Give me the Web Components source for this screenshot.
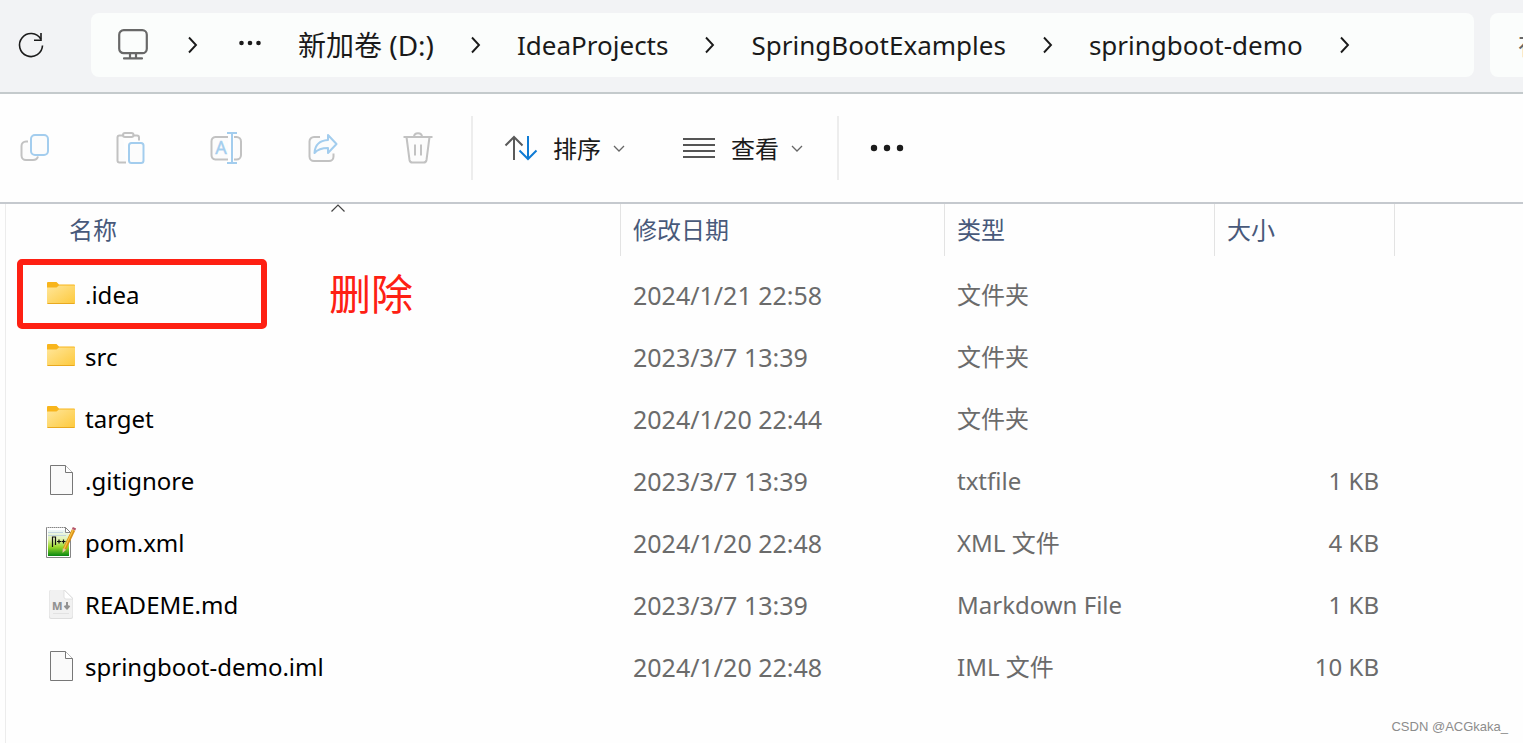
<!DOCTYPE html>
<html lang="zh-CN">
<head>
<meta charset="utf-8">
<title>springboot-demo</title>
<style>
html, body { margin: 0; min-height: 100%; background: #fefefe; }
body { font-family: "Noto Sans", "Noto Sans CJK SC", sans-serif; color: #1a1a1a; overflow-x: hidden; }
</style>
</head>
<body>
<explorer-window></explorer-window>

<script>
const ICONS = {
  refresh: [32, 32, `<g fill="none" stroke="#1b1b1b" stroke-width="1.6"><path d="M27.5 16.5A11.5 11.5 0 1 1 25.8 10"/><path d="M26 4v7.2h-7"/></g>`],
  monitor: [32, 32, `<g fill="none" stroke="#686868" stroke-width="2.2" stroke-linecap="round"><rect x="2.2" y="1.2" width="27.6" height="23" rx="4.5"/><path d="M13 25v4M19 25v4M7 29.4h18"/></g>`],
  next: [12, 20, `<path d="M2 2.5 9 10l-7 7.500" fill="none" stroke="#1b1b1b" stroke-width="1.9"/>`],
  dots: [24, 20, `<g fill="#1b1b1b"><circle cx="3.500" cy="8" r="2.300"/><circle cx="12" cy="8" r="2.300"/><circle cx="20.500" cy="8" r="2.300"/></g>`],
  copy: [40, 40, `<g fill="#fcfcfc" stroke-width="2"><path stroke="#c2c2c2" stroke-linecap="butt" d="M14 13.500h-2a4.500 4.500 0 0 0-4.500 4.500v9.500a4.500 4.500 0 0 0 4.500 4.500h7q4 0 5-3.500"/><rect stroke="#a3cdee" x="17" y="7" width="17" height="20" rx="4"/></g>`],
  paste: [40, 40, `<g fill="#fcfcfc" stroke-width="2"><path stroke="#c2c2c2" d="M13 7.500H9.500a2 2 0 0 0-2 2V32.500a2 2 0 0 0 2 2H16M24 7.500h3a2 2 0 0 1 2 2v3"/><rect stroke="#c2c2c2" x="13" y="5" width="10.500" height="4" rx="2"/><rect stroke="#a3cdee" x="19" y="15" width="14.500" height="20" rx="2.500"/></g>`],
  rename: [40, 40, `<g fill="none" stroke-width="2"><path stroke="#c2c2c2" fill="#fcfcfc" d="M22 9H9.500a4.500 4.500 0 0 0-4 4.500V27a4.500 4.500 0 0 0 4 4.500H22M28 9h2.500a4.500 4.500 0 0 1 4.500 4.500V27a4.500 4.500 0 0 1-4.500 4.500H28"/><path stroke="#a3cdee" d="M26 5v30M21 5h10M21 35h10"/></g><text x="15" y="26" text-anchor="middle" font-family="Noto Sans, sans-serif" font-size="18" fill="#a3cdee" stroke="#a3cdee" stroke-width=".4">A</text>`],
  share: [40, 40, `<g fill="#fcfcfc" stroke-width="2" stroke-linejoin="round"><path stroke="#c2c2c2" d="M18 9h-6a4.500 4.500 0 0 0-4.500 4.500v15a4.500 4.500 0 0 0 4.500 4.500h15a4.500 4.500 0 0 0 4.500-4.500v-3"/><path stroke="#a3cdee" d="M26 7l8.500 9-8.500 9v-5c-6 0-10 1-13.500 5 .5-8 5-12.500 13.500-13z"/></g>`],
  trash: [40, 40, `<g fill="#fcfcfc" stroke="#c2c2c2" stroke-width="2"><path d="M16 9c0-5 8-5 8 0"/><path d="M8.500 9l3 23a3 3 0 0 0 3 2.500h11a3 3 0 0 0 3-2.500l3-23"/><path d="M5.500 9h29M17 16.500v11M23 16.500v11"/></g>`],
  sort: [40, 40, `<g fill="none" stroke-width="2"><path stroke="#5a5a5a" d="M13 32V8.500M4.500 17.500 13 9l8.500 8.500"/><path stroke="#0f7bd4" d="M27 8v23.500M18.500 22.500 27 31l8.500-8.500"/></g>`],
  view: [40, 40, `<path stroke="#555" stroke-width="2" d="M4 11h32M4 17h32M4 23h32M4 29h32"/>`],
  down: [12, 12, `<path d="M1 4l5 5 5-5" fill="none" stroke="#666" stroke-width="1.300"/>`],
  up: [16, 8, `<path d="M1.500 7.500 8 1l6.500 6.500" fill="none" stroke="#444" stroke-width="1.200"/>`],
  more: [40, 40, `<g fill="#1b1b1b"><circle cx="7" cy="20" r="3.200"/><circle cx="20" cy="20" r="3.200"/><circle cx="33" cy="20" r="3.200"/></g>`],
  folder: [32, 32, `<defs><linearGradient id="f" x1="0" y1="0" x2="1" y2="1"><stop offset="0" stop-color="#ffe69a"/><stop offset="1" stop-color="#fdc93c"/></linearGradient></defs><path fill="#f8b51c" d="M3 3h8.500L14 5.500h15a1 1 0 0 1 1 1V20H2V4a1 1 0 0 1 1-1z"/><path fill="url(#f)" d="M2 8.500h9.500L14 6.500h16V24a1 1 0 0 1-1 1H3a1 1 0 0 1-1-1z"/><path stroke="#e9a91f" d="M2.500 24.500h27"/>`],
  file: [32, 32, `<path fill="#fafafa" stroke="#777" d="M5.500.5h15l7 7v22h-22z"/><path fill="#fff" stroke="#777" d="M20.500.5v7h7"/>`],
  npp: [32, 32, `<defs><linearGradient id="g" x1="0" y1="0" x2="0" y2="1"><stop offset="0" stop-color="#eef7fb"/><stop offset=".35" stop-color="#e2f3b4"/><stop offset=".65" stop-color="#9ad92c"/><stop offset="1" stop-color="#078612"/></linearGradient></defs><path fill="#fff" stroke="#858585" d="M1.500.5h19l5 5v25h-24z"/><path fill="url(#g)" d="M3 3h17l4 4v22H3z"/><path stroke="#b7cddd" d="M3 5.500h15M3 8.500h18" stroke-width=".8"/><path stroke="#fff" stroke-dasharray="1 1" d="M2 1.500h17" stroke-width="2"/><path fill="#fff" stroke="#858585" d="M20.500.5v5h5z"/><path fill="none" stroke="#111" stroke-width="1.200" d="M7.500 20V10h3v8M12 14.500h4M14 12.500v4M16.500 14.500h4M18.500 12.500v4"/><path stroke="#d99016" stroke-width="3.600" d="M28.500 3 19.500 22"/><path stroke="#f8c545" stroke-width="1.200" d="M28 3 19 22"/><path fill="#e7c89d" d="M17.800 21.200 21.200 22.800 17.500 26z"/><path stroke="#b65568" stroke-width="3.600" d="M29.500.8 28.600 2.800"/>`],
  md: [32, 32, `<path fill="#ddd" d="M4 3a2 2 0 0 1 2-2h14l8 8v19a2 2 0 0 1-2 2H6a2 2 0 0 1-2-2z"/><path fill="#f1f1f1" d="M4.500 3A2 2 0 0 1 6 1h14l7.500 8v18a2 2 0 0 1-2 2H6.500a2 2 0 0 1-2-2z"/><path fill="#fff" stroke="#dcdcdc" stroke-width=".8" d="M19 1v7a2 2 0 0 0 2 2h7z"/><path stroke="#e2e2e2" d="M8 24.500h16"/><text x="7" y="21" font-family="Noto Sans, sans-serif" font-weight="800" font-size="11" fill="#929292">M</text><path fill="none" stroke="#929292" stroke-width="2" d="M22 13v7M19.500 16.800l2.500 2.700 2.500-2.700"/>`]
};

class ExIcon extends HTMLElement {
  constructor() {
    super();
    this.attachShadow({ mode: "open" });
  }
  connectedCallback() {
    const [w, h, body] = ICONS[this.getAttribute("name")];
    this.shadowRoot.innerHTML = `
      <style>:host { display: block; flex: none; } svg { display: block; overflow: visible; }</style>
      <svg width="${w}" height="${h}" viewBox="0 0 ${w} ${h}" aria-hidden="true">${body}</svg>`;
  }
}
customElements.define("ex-icon", ExIcon);

class AddressBar extends HTMLElement {
  constructor() {
    super();
    this.attachShadow({ mode: "open" }).innerHTML = `
      <style>
        :host { display: flex; align-items: center; height: 92px; gap: 16px;
          background: #f2f3f5; border-bottom: 2px solid #c4cacc; overflow: hidden; }
        button { border: 0; background: none; padding: 0; font: inherit; color: inherit; }
        .refresh { flex: none; width: 60px; padding: 0 0 2px 15px; box-sizing: border-box; }
        nav { flex: 1; min-width: 0; height: 64px; margin: 0 0 2px 15px; padding-left: 26px; box-sizing: border-box;
          display: flex; align-items: center; background: #fbfdfc; border-radius: 8px; overflow: hidden; }
        ol { display: flex; align-items: center; gap: 35px; list-style: none; margin: 0; padding: 0;
          font-size: 26px; line-height: 40px; white-space: nowrap; }
        li { display: flex; align-items: center; gap: 36px; }
        .root { gap: 38px; margin-right: 4px; }
        .drive { font-size: 28px; }
        a { color: inherit; text-decoration: none; }
        input { flex: none; width: 33px; height: 64px; margin-bottom: 2px; padding: 0 0 0 28px; box-sizing: border-box;
          border: 0; border-radius: 8px 0 0 8px; background: #fbfdfc; font: inherit; font-size: 26px; outline: 0; }
        input::placeholder { color: #666; opacity: 1; }
      </style>
      <button class="refresh" aria-label="刷新"><ex-icon name="refresh"></ex-icon></button>
      <nav aria-label="地址">
        <ol>
          <li class="root"><ex-icon name="monitor"></ex-icon><ex-icon name="next"></ex-icon></li>
          <li><ex-icon name="dots"></ex-icon><a class="drive" href="#d">新加卷 (D:)</a><ex-icon name="next"></ex-icon></li>
          <li><a href="#ideaprojects">IdeaProjects</a><ex-icon name="next"></ex-icon></li>
          <li><a href="#examples">SpringBootExamples</a><ex-icon name="next"></ex-icon></li>
          <li><a href="#demo">springboot-demo</a><ex-icon name="next"></ex-icon></li>
        </ol>
      </nav>
      <input type="text" aria-label="搜索" placeholder="在 springboot-demo 中搜索">`;
  }
}
customElements.define("address-bar", AddressBar);

class ToolButton extends HTMLElement {
  constructor() {
    super();
    this.attachShadow({ mode: "open" });
  }
  connectedCallback() {
    const menu = this.hasAttribute("menu");
    this.shadowRoot.innerHTML = `
      <style>
        :host { display: block; flex: none; }
        button { display: flex; align-items: center; gap: 12px; min-width: 48px; height: 48px; justify-content: center;
          border: 0; background: none; padding: 0; font: inherit; font-size: 24px; line-height: 36px; color: #1b1b1b; }
        span { padding-top: 2px; }
        span:empty { display: none; }
      </style>
      <button aria-label="${this.getAttribute("label")}"><ex-icon name="${this.getAttribute("icon")}"></ex-icon>${menu ? '<span><slot></slot></span><ex-icon name="down"></ex-icon>' : ""}</button>`;
  }
}
customElements.define("tool-button", ToolButton);

class CommandBar extends HTMLElement {
  constructor() {
    super();
    this.attachShadow({ mode: "open" }).innerHTML = `
      <style>
        :host { display: flex; align-items: center; height: 108px; padding-left: 10px; border-bottom: 2px solid #c5c9ce; background: #fefefe; }
        .group { display: flex; gap: 48px; }
        .menus { display: flex; gap: 54px; padding: 0 34px 0 28px; margin: 0 24px 0 29px; border: solid #ededed; border-width: 0 2px; height: 64px; align-items: center; }
      </style>
      <div class="group">
        <tool-button icon="copy" label="复制"></tool-button>
        <tool-button icon="paste" label="粘贴"></tool-button>
        <tool-button icon="rename" label="重命名"></tool-button>
        <tool-button icon="share" label="共享"></tool-button>
        <tool-button icon="trash" label="删除"></tool-button>
      </div>
      <div class="menus">
        <tool-button icon="sort" label="排序" menu>排序</tool-button>
        <tool-button icon="view" label="查看" menu>查看</tool-button>
      </div>
      <tool-button icon="more" label="更多"></tool-button>`;
  }
}
customElements.define("command-bar", CommandBar);

const FILES = [
  ["folder", ".idea", "2024/1/21 22:58", "文件夹", ""],
  ["folder", "src", "2023/3/7 13:39", "文件夹", ""],
  ["folder", "target", "2024/1/20 22:44", "文件夹", ""],
  ["file", ".gitignore", "2023/3/7 13:39", "txtfile", "1 KB"],
  ["npp", "pom.xml", "2024/1/20 22:48", "XML 文件", "4 KB"],
  ["md", "READEME.md", "2023/3/7 13:39", "Markdown File", "1 KB"],
  ["file", "springboot-demo.iml", "2024/1/20 22:48", "IML 文件", "10 KB"]
];

class MarkNote extends HTMLElement {
  constructor() {
    super();
    this.attachShadow({ mode: "open" }).innerHTML = `
      <style>
        :host { position: absolute; left: 11px; top: -5px; display: flex; align-items: center; gap: 62px; height: 70px; pointer-events: none; }
        i { width: 250px; height: 70px; box-sizing: border-box; border: 6px solid #fe2013; border-radius: 5px; }
        span { font-size: 42px; line-height: 60px; color: #fe2013; white-space: nowrap; }
      </style>
      <i></i><span><slot></slot></span>`;
  }
}
customElements.define("mark-note", MarkNote);

class FileList extends HTMLElement {
  constructor() {
    super();
    const rows = FILES.map(([icon, name, date, type, size], i) => `
      <tr>
        <td class="name"><div><ex-icon name="${icon}"></ex-icon><span>${name}</span></div>${i ? "" : "<mark-note>删除</mark-note>"}</td>
        <td class="date">${date}</td><td>${type}</td><td class="size">${size}</td><td></td>
      </tr>`).join("");
    this.attachShadow({ mode: "open" }).innerHTML = `
      <style>
        :host { display: block; margin-left: 5px; border-left: 1px solid #ececec; }
        table { width: 100%; table-layout: fixed; border-collapse: collapse; font-size: 24px; line-height: 36px; color: #6b6b6b; }
        .c1 { width: 615px; } .c2 { width: 324px; } .c3 { width: 270px; } .c4 { width: 180px; }
        th { padding: 0 0 8px; height: 52px; font-weight: 400; text-align: left; color: #48597a; position: relative; }
        th div { height: 52px; padding: 0 12px; box-sizing: border-box; border-right: 1px solid #e3e3e3; display: flex; align-items: center; }
        th:first-child div { padding-left: 63px; }
        th ex-icon { position: absolute; left: 324px; top: 0; }
        td { padding: 0 12px; height: 62px; white-space: nowrap; }
        thead td { height: auto; }
        .name { padding-left: 39px; position: relative; color: #000; }
        .name div { display: flex; align-items: center; gap: 8px; }
        .date { font-size: 25px; }
        .size { text-align: right; padding-right: 16px; }
      </style>
      <table>
        <colgroup><col class="c1"><col class="c2"><col class="c3"><col class="c4"><col></colgroup>
        <thead><tr><th scope="col" aria-sort="ascending"><div>名称</div><ex-icon name="up"></ex-icon></th><th scope="col"><div>修改日期</div></th><th scope="col"><div>类型</div></th><th scope="col"><div>大小</div></th><td></td></tr></thead>
        <tbody>${rows}</tbody>
      </table>`;
  }
}
customElements.define("file-list", FileList);

class ExplorerWindow extends HTMLElement {
  constructor() {
    super();
    this.attachShadow({ mode: "open" }).innerHTML = `
      <style>
        :host { display: flex; flex-direction: column; min-height: 100vh; position: relative; }
        file-list { flex: 1; }
        small { position: absolute; right: 15px; bottom: 6px; font: 13px/20px "Liberation Sans", sans-serif; color: #8c8c8c; }
      </style>
      <address-bar></address-bar>
      <command-bar></command-bar>
      <file-list></file-list>
      <small>CSDN @ACGkaka_</small>`;
  }
}
customElements.define("explorer-window", ExplorerWindow);
</script>
</body>
</html>
